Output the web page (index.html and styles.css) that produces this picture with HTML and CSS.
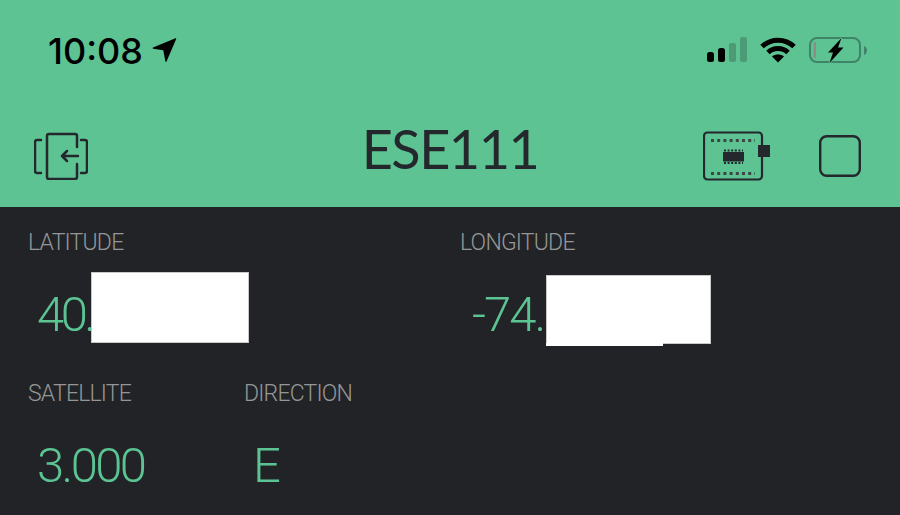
FILE: index.html
```html
<!DOCTYPE html>
<html lang="en">
<head>
    <meta charset="UTF-8">
    <title>ESE111</title>
    <link rel="stylesheet" href="styles.css">
</head>
<body>
    <header class="app-header">
        <div class="status-bar">
            <div class="status-left">
                <span class="clock">10:08</span>
                <svg class="location" width="25" height="26" viewBox="0 0 25 26"><path d="M1 10.5 23.5 1.2c.5-.2.9.2.7.7L14.5 24.6c-.3.6-1 .5-1.1-.1L11.300 13.200 1.200 11.800c-.6-.1-.8-1-.2-1.300z" fill="#000"/></svg>
            </div>
            <div class="status-right">
                <svg width="40" height="26" viewBox="0 0 40 26">
                    <rect x="0" y="15" width="7" height="10" rx="2.500" fill="#000"/>
                    <rect x="11" y="11" width="7" height="14" rx="2.500" fill="#000"/>
                    <rect x="22" y="6" width="7" height="19" rx="2" fill="#4c9a76"/>
                    <rect x="33" y="0" width="7" height="25" rx="2" fill="#4c9a76"/>
                </svg>
                <svg width="36" height="26" viewBox="0 0 36 26">
                    <path d="M2 9.500C11 1 25 1 34 9.500M8 15.500C13.500 10.300 22.500 10.300 28 15.500" fill="none" stroke="#000" stroke-width="5"/>
                    <path d="M12 19.500c3.500-2.600 8.500-2.600 12 0l-6 6z" fill="#000"/>
                </svg>
                <svg width="58" height="26" viewBox="0 0 58 26">
                    <rect x="1" y="1" width="50" height="24" rx="7" fill="none" stroke="#3f8468" stroke-width="2"/>
                    <rect x="4.500" y="5" width="2.500" height="16" fill="#8f8b8b"/>
                    <path d="M55 9c2 1 3 2.500 3 4.500S57 17 55 18z" fill="#3f8468"/>
                    <path d="M19 15.500 32.500 1l-3.500 9.500h5.500L20.500 26l3.500-10.500z" fill="#000" stroke="#5dc393" stroke-width="1.500" paint-order="stroke"/>
                </svg>
            </div>
        </div>
        <div class="toolbar">
            <div class="toolbar-left">
                <svg width="54" height="48" viewBox="0 0 54 48" fill="none" stroke="#24272c" stroke-width="2.500" stroke-linecap="round" stroke-linejoin="round">
                    <path d="M7 8H3Q1 8 1 10V39Q1 41 3 41H7"/>
                    <path d="M47 8H51Q53 8 53 10V39Q53 41 51 41H47"/>
                    <path d="M43 15V4Q43 2 41 2H15Q13 2 13 4V45Q13 47 15 47H41Q43 47 43 45V32"/>
                    <path d="M44 24H28M33 19l-5 5 5 5"/>
                </svg>
            </div>
            <h1 class="title">ESE111</h1>
            <div class="toolbar-right">
                <svg width="67" height="50" viewBox="0 0 67 50">
                    <rect x="1" y="1.500" width="58" height="47" rx="3.500" fill="none" stroke="#24272c" stroke-width="2.200"/>
                    <path d="M8 9.500H52M8 42.500H52" fill="none" stroke="#3a4743" stroke-width="3" stroke-dasharray="3 3.200"/>
                    <rect x="20" y="21" width="21" height="9.500" fill="#24272c"/>
                    <path d="M21 32H40M21 19.500H40" fill="none" stroke="#24272c" stroke-width="2" stroke-dasharray="2 1.600"/>
                    <rect x="55" y="14" width="12" height="12" fill="#24272c"/>
                </svg>
                <svg width="42" height="42" viewBox="0 0 42 42"><rect x="1.200" y="1.200" width="39.600" height="39.600" rx="6.500" fill="none" stroke="#24272c" stroke-width="2.400"/></svg>
            </div>
        </div>
    </header>
    <main class="dashboard">
        <section class="widget wide">
            <div class="label">LATITUDE</div>
            <div class="value value-lat">40.</div>
            <div class="mask mask-lat"></div>
        </section>
        <section class="widget wide">
            <div class="label">LONGITUDE</div>
            <div class="value value-lng">-74.</div>
            <div class="mask mask-lng"></div>
        </section>
        <section class="widget">
            <div class="label">SATELLITE</div>
            <div class="value">3.000</div>
        </section>
        <section class="widget">
            <div class="label">DIRECTION</div>
            <div class="value">E</div>
        </section>
    </main>
</body>
</html>
```

FILE: styles.css
```css
html, body { margin: 0; padding: 0; height: 100%; overflow: hidden; }
body { background: #212327; font-family: Roboto, "Liberation Sans", sans-serif; }

.app-header { height: 207px; background: #5dc393; box-sizing: border-box; padding-top: 37px; }

.status-bar { display: flex; justify-content: space-between; align-items: center; height: 26px; padding: 0 33px 0 48px; }
.status-left { display: flex; align-items: center; gap: 9px; }
.clock { margin-top: 1px; font-family: Inter, Roboto, sans-serif; font-size: 36px; font-weight: 500; line-height: 26px; color: #000; }
.status-right { display: flex; align-items: center; gap: 13px; }
.status-right svg, .location { display: block; }

.toolbar { display: grid; grid-template-columns: 1fr auto 1fr; align-items: center; height: 50px; margin-top: 68px; }
.toolbar svg { display: block; }
.toolbar-left { padding-left: 34px; }
.toolbar-right { display: flex; justify-content: flex-end; align-items: center; gap: 49px; padding-right: 39px; }
.title { margin: 0 0 14px; font-family: Lato, sans-serif; font-size: 54px; font-weight: 400; letter-spacing: -1.5px; line-height: 36px; color: #24272c; }

.dashboard { display: grid; grid-template-columns: repeat(4, 216px); grid-auto-rows: 151px; padding: 26px 0 0 28px; }
.widget { position: relative; }
.wide { grid-column: span 2; }
.label { font-size: 23px; font-weight: 300; letter-spacing: -0.8px; line-height: 20px; color: #959796; }
.value { margin-top: 34px; padding-left: 9px; font-size: 49px; font-weight: 300; letter-spacing: -2.6px; line-height: 56px; color: #5cc393; }
.value-lat { letter-spacing: -3.5px; }
.value-lng { padding-left: 12px; letter-spacing: -2px; }

.mask { position: absolute; background: #fff; box-shadow: inset 0 0 0 1px #c9c9c9; }
.mask-lat { left: 63px; top: 39px; width: 158px; height: 71px; }
.mask-lng { left: 86px; top: 42px; width: 165px; height: 69px; }
.mask-lng::after { content: ""; position: absolute; left: 0; top: 68px; width: 117px; height: 3px; background: #fff; }
```
